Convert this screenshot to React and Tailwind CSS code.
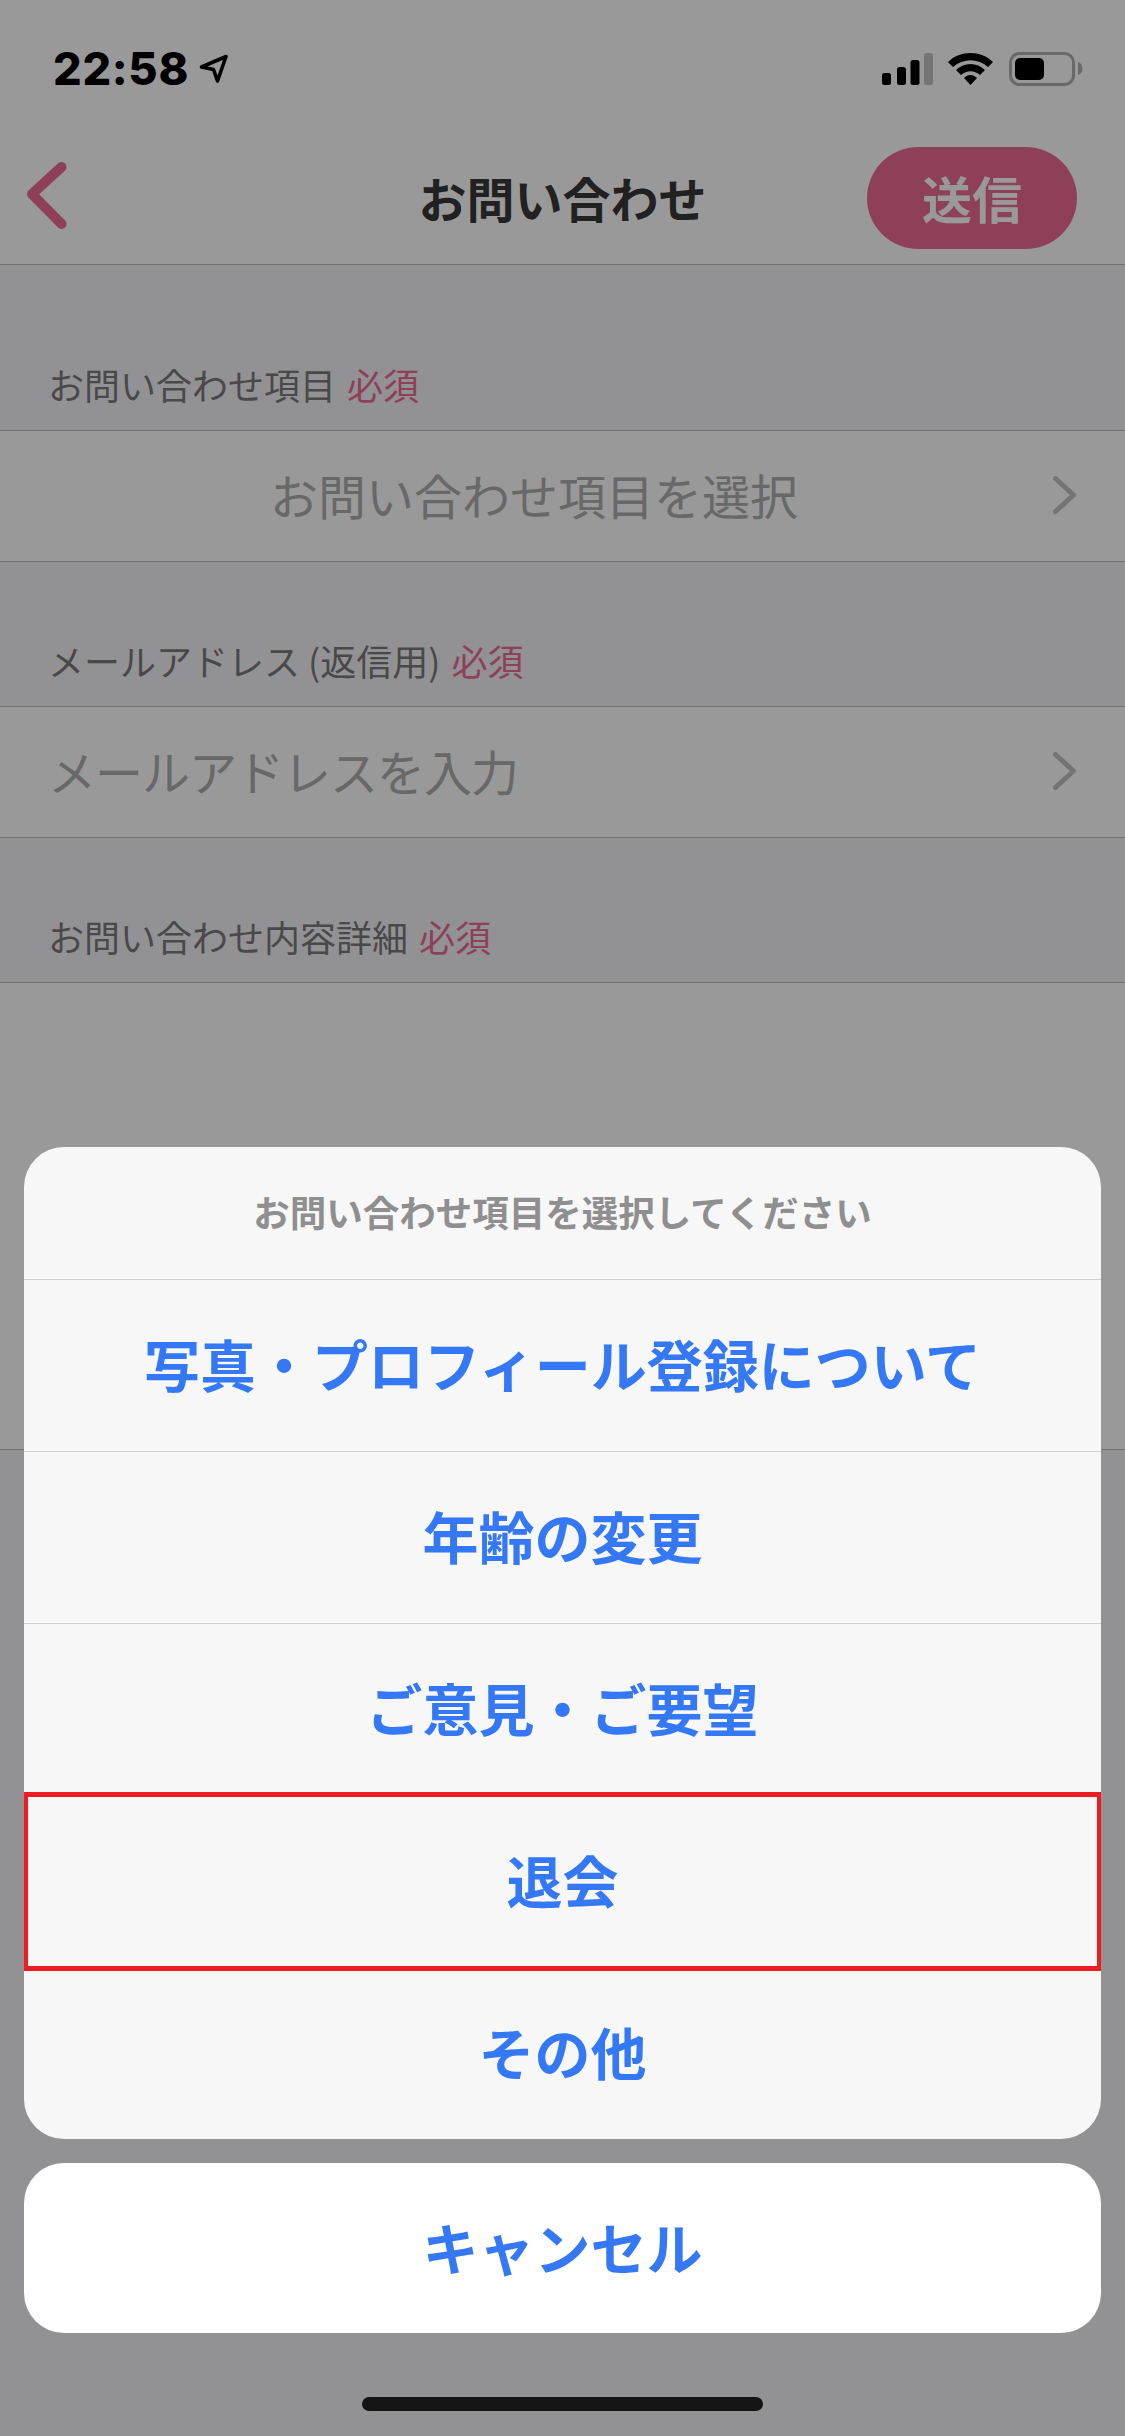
const Chevron = () => (
  <svg viewBox="0 0 23 38" className="w-[23px] h-[38px] shrink-0 -mt-[3px]" fill="none">
    <path d="M2.5 2.5 L20.5 19 L2.5 35.5" stroke="#c2c2c2" strokeWidth="5" strokeLinecap="round" strokeLinejoin="round" />
  </svg>
);

const Label = ({ text }) => (
  <div className="flex items-center h-[56px] gap-[11px] pl-[48px] mb-[18px] text-[36px] leading-[56px] text-[#7b7b7b]">
    <span>{text}</span>
    <span className="text-[#ee6b95]">必須</span>
  </div>
);

const StatusBar = () => (
  <div className="relative h-[132px]">
    <div className="absolute left-[53px] top-[48px] flex items-center h-[42px]">
      <span className="font-['Inter','Liberation_Sans',sans-serif] font-extrabold text-[45px] leading-[42px] text-black tracking-[0.7px]">22:58</span>
    </div>
    <svg className="absolute left-[199px] top-[54px]" width="30" height="30" viewBox="0 0 30 30" fill="none">
      <path d="M2.5 13 L27 2.5 L18.5 27 L14.5 15.5 Z" stroke="#000" strokeWidth="3.6" strokeLinejoin="round" />
    </svg>
    <svg className="absolute left-[880px] top-[50px]" width="205" height="38" viewBox="0 0 205 38" fill="none">
      <rect x="2" y="23" width="9" height="12" rx="2.5" fill="#000" />
      <rect x="17" y="17" width="9" height="18" rx="2.5" fill="#000" />
      <rect x="30.5" y="10" width="9" height="25" rx="2.5" fill="#000" />
      <rect x="44" y="3" width="9" height="32" rx="2.5" fill="#c4c4c4" />
      <path d="M68 12 C 80 0, 101 0, 113 12 L108 17 C 98 8, 83 8, 73 17 Z" fill="#000" />
      <path d="M76 20 C 84 12, 97 12, 105 20 L100 25 C 94 20, 87 20, 81 25 Z" fill="#000" />
      <path d="M84 28 C 88 24, 93 24, 97 28 L90.5 35 Z" fill="#000" />
      <rect x="130.5" y="3.5" width="63" height="31" rx="9" stroke="#b0b0b0" strokeWidth="3" />
      <rect x="135" y="8" width="29" height="22" rx="5" fill="#000" />
      <path d="M198 12 C 201 13, 202.5 16, 202.5 19 C 202.5 22, 201 24, 198 25 Z" fill="#b0b0b0" />
    </svg>
  </div>
);

const options = ["写真・プロフィール登録について", "年齢の変更", "ご意見・ご要望", "退会", "その他"];

export default function App() {
  return (
    <div className="relative w-[1125px] h-[2436px] overflow-hidden bg-[#f3f4f8] font-['Noto_Sans_CJK_JP','Liberation_Sans',sans-serif]">
      <div className="bg-white">
        <StatusBar />
        <div className="relative h-[133px] border-b border-[#bcbcbc] flex items-center justify-center">
          <svg className="absolute left-[24px] top-[29px]" width="46" height="70" viewBox="0 0 46 70" fill="none">
            <path d="M37.5 6 L8 33 L37.5 63" stroke="#ee6b95" strokeWidth="10" strokeLinecap="round" strokeLinejoin="round" />
          </svg>
          <span className="text-[48px] leading-[60px] font-bold text-[#383838] -mt-[3px]">お問い合わせ</span>
          <div className="absolute left-[867px] top-[15px] w-[210px] h-[102px] rounded-full bg-[#ee6b95] flex items-center justify-center">
            <span className="text-[50px] leading-[60px] font-bold text-white -mt-[3px]">送信</span>
          </div>
        </div>
      </div>

      <div className="h-[91px]" />
      <Label text="お問い合わせ項目" />
      <div className="flex items-center h-[132px] bg-white border-y border-[#bcbcbc] pl-[48px] pr-[49px] gap-[33px]">
        <span className="flex-1 text-center text-[48px] leading-[60px] text-[#aeaeae] -mt-[5px]">お問い合わせ項目を選択</span>
        <Chevron />
      </div>

      <div className="h-[70px]" />
      <Label text="メールアドレス (返信用)" />
      <div className="flex items-center h-[132px] bg-white border-y border-[#bcbcbc] pl-[48px] pr-[49px] gap-[33px]">
        <span className="flex-1 text-[48px] leading-[60px] tracking-[-1px] text-[#aeaeae] -mt-[5px]">メールアドレスを入力</span>
        <Chevron />
      </div>

      <div className="h-[70px]" />
      <Label text="お問い合わせ内容詳細" />
      <div className="h-[468px] bg-white border-y border-[#bcbcbc]" />

      <div className="absolute inset-0 bg-black/40" />

      <div className="absolute left-[24px] top-[1147px] w-[1077px] flex flex-col gap-[24px]">
        <div className="rounded-[40px] bg-[#f7f7f7] overflow-hidden">
          <div className="h-[132px] flex items-center justify-center pb-[3px] text-[36.5px] leading-[50px] font-bold text-[#8f8f8f]">
            お問い合わせ項目を選択してください
          </div>
          {options.map((o) => (
            <div key={o} className="relative h-[172px] border-t border-[#d2d2d2] flex items-center justify-center pb-[5px] text-[56px] leading-[70px] font-bold text-[#3478f6]">
              {o}
              {o === "退会" && (
                <div className="absolute z-10 left-0 right-0 -top-[4px] -bottom-[4px] border-x-[4px] border-y-[5px] border-[#ed1c24]" />
              )}
            </div>
          ))}
        </div>
        <div className="h-[170px] rounded-[40px] bg-white flex items-center justify-center pb-[5px] text-[56px] leading-[70px] font-bold text-[#3478f6]">
          キャンセル
        </div>
      </div>

      <div className="absolute left-[362px] top-[2397px] w-[401px] h-[14px] rounded-full bg-[#141414]" />
    </div>
  );
}
